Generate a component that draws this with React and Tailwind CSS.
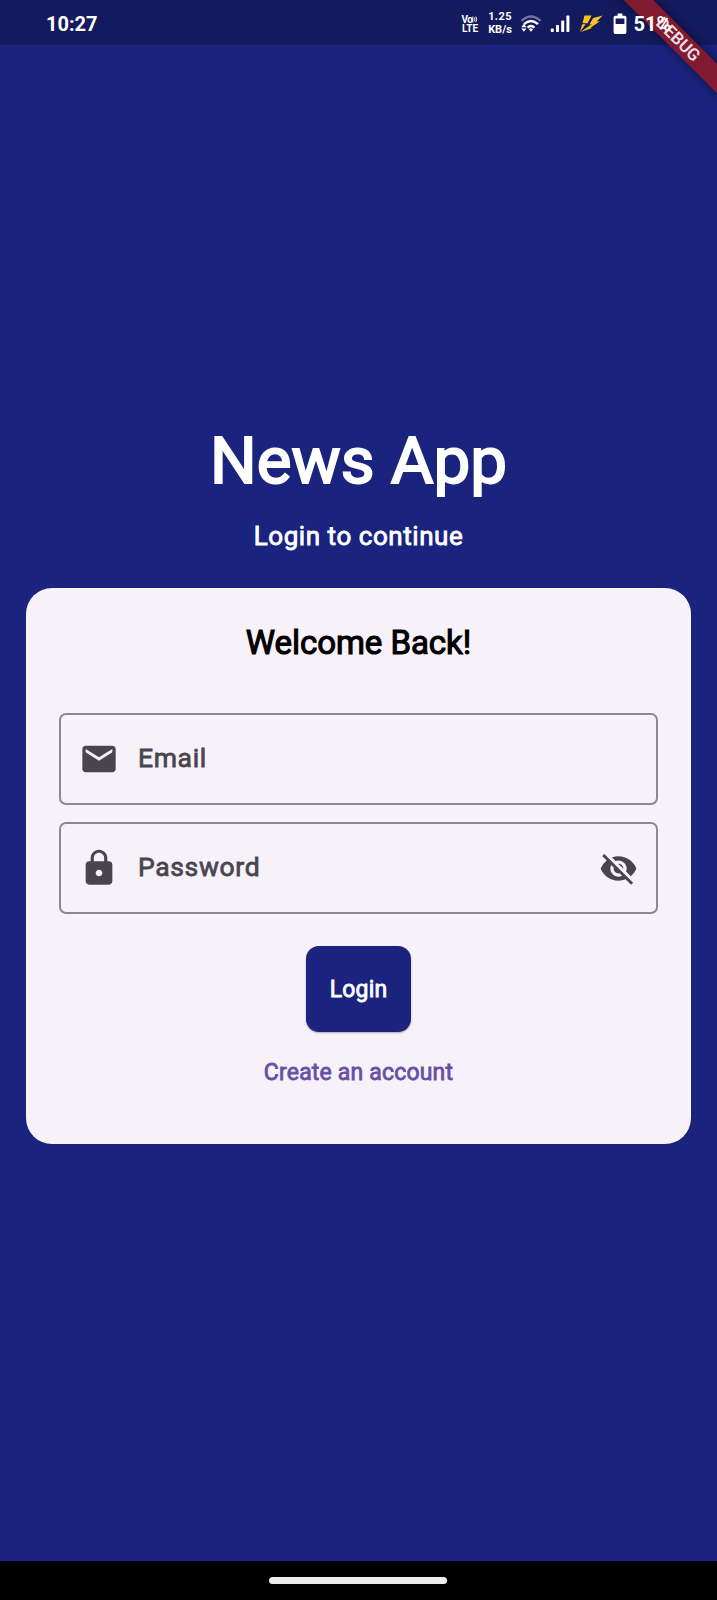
import { MdEmail, MdLock, MdVisibilityOff } from "react-icons/md";

function StatusBar() {
  return (
    <header className="flex h-[45px] shrink-0 items-center bg-[#131a5d] pt-[2px] pl-[46px] text-white">
      <span className="text-[20px] leading-6 font-bold">10:27</span>
      <div className="ml-auto flex h-full items-center">
        <div className="flex w-[18px] flex-col items-center text-[10px] leading-[9px] font-bold">
          <span className="flex h-[9px] items-center tracking-[-0.6px]">
            Vo
            <svg className="h-[9px] w-[6px]" viewBox="0 0 7 9" fill="none" stroke="currentColor" strokeWidth="1.1">
              <path d="M1 1v7M2.8 2.2q1.3 2 0 4.3M4.4 1q2.2 3.2 0 6.6" />
            </svg>
          </span>
          <span>LTE</span>
        </div>
        <div className="ml-[8px] flex w-[26px] flex-col items-center text-[11px] leading-[12.500px] font-bold">
          <span className="tracking-[0.4px]">1.25</span>
          <span>KB/s</span>
        </div>
        <svg className="ml-[7px] h-[20px] w-[22px]" viewBox="0 0 22 20" fill="none" stroke="currentColor" strokeWidth="2.4">
          <path d="M1.500 6.800Q11 -1.800 20.500 6.800" opacity=".4" />
          <path d="M4 10.200Q11 3.600 18 10.200" />
          <path d="M7.600 13.600Q11 10.400 14.400 13.600" />
          <path d="M8.800 15.200Q11 13.400 13.200 15.200L11 17.800z" fill="currentColor" stroke="none" />
          <path d="M3.900 9.800l2.600 3.400H1.300zM3.900 17.800l2.600-3.400H1.300z" fill="currentColor" stroke="none" />
        </svg>
        <svg className="ml-[8px] h-[18px] w-[20px]" viewBox="0 0 20 18" fill="currentColor">
          <rect x="0.8" y="13.5" width="3" height="3.5" rx=".7" />
          <rect x="6" y="10" width="3" height="7" rx=".7" />
          <rect x="11.2" y="5.5" width="3" height="11.5" rx=".7" />
          <rect x="16.4" y="0.5" width="3" height="16.5" rx=".7" />
        </svg>
        <svg className="ml-[9px] h-[18px] w-[24px]" viewBox="0 0 24 18" fill="#fcc421">
          <path d="M5.500 .5H12.600L8.600 8.200H3.500z" />
          <path d="M3.200 9.200H6.600L1 16.800z" />
          <path d="M23.800 .5L14.200 3 10.400 9.600 13 9.100 1.200 17.300 12.500 13.200 11.800 12.600 21 6.200 17.600 6.400z" />
        </svg>
        <svg className="ml-[10px] h-[22px] w-[14px]" viewBox="0 0 14 22">
          <path fill="currentColor" fillRule="evenodd" d="M4.6.5h4.8v2.2h2.2q1.8 0 1.8 1.8v14.7q0 1.8-1.8 1.8H2.4Q.6 21 .6 19.200V4.5q0-1.800 1.800-1.800h2.200zM2.600 5.600v5.400h8.800V5.600z" />
        </svg>
        <span className="relative z-20 ml-[6.500px] w-[83.500px] text-[20px] leading-6 font-bold">51%</span>
      </div>
    </header>
  );
}

function DebugBanner() {
  return (
    <div className="pointer-events-none absolute top-0 right-0 z-10 h-[120px] w-[120px] overflow-hidden">
      <div className="absolute top-[28.500px] left-[-19px] flex h-[21px] w-[200px] rotate-45 items-center justify-center bg-[#7f1a30] text-[17px] leading-none font-semibold text-[#ecdde6] shadow-[0_0_10px_rgba(0,0,0,0.5)]">
        DEBUG
      </div>
    </div>
  );
}

function Field({ icon: Icon, label, trailing: Trailing }) {
  return (
    <label className="flex h-[92px] items-center rounded-[7px] border-2 border-[#8d8791] pr-[18px] pl-[17.500px] text-[#49454f]">
      <Icon className="size-[40px]" />
      <span className="-mt-[2px] ml-[19.500px] text-[26.500px] leading-8 tracking-[0.65px] [-webkit-text-stroke:0.8px_currentColor]">{label}</span>
      {Trailing && <Trailing className="ml-auto size-[39px]" />}
    </label>
  );
}

export default function App() {
  return (
    <div className="relative flex h-[1600px] w-[717px] flex-col overflow-hidden bg-[#1a237e] font-[Roboto,sans-serif]">
      <StatusBar />
      <DebugBanner />
      <main className="flex flex-1 flex-col items-center px-[26px] pt-[376px]">
        <h1 className="text-[65.500px] leading-[80px] text-white [-webkit-text-stroke:2px_currentColor]">News App</h1>
        <p className="mt-[20px] text-[26px] leading-[30px] tracking-[0.55px] text-white [-webkit-text-stroke:0.8px_currentColor]">Login to continue</p>
        <section className="mt-[37px] flex h-[555.500px] w-full flex-col items-center rounded-[26px] bg-[#f7f2fa] px-[33px] pt-[35px]">
          <h2 className="text-[33px] leading-[40px] tracking-[-0.05px] text-black [-webkit-text-stroke:1.1px_currentColor]">Welcome Back!</h2>
          <div className="mt-[50px] flex w-full flex-col gap-[17px]">
            <Field icon={MdEmail} label="Email" />
            <Field icon={MdLock} label="Password" trailing={MdVisibilityOff} />
          </div>
          <button className="mt-[32px] h-[86px] w-[105px] rounded-[13px] bg-[#1a237e] pt-[2px] text-[23px] tracking-[0.15px] text-white shadow-[0_1px_2px_rgba(0,0,0,0.3)] [-webkit-text-stroke:0.8px_currentColor]">Login</button>
          <a className="mt-[27px] text-[23px] leading-[28px] tracking-[0.18px] text-[#6750a4] [-webkit-text-stroke:0.8px_currentColor]">Create an account</a>
        </section>
      </main>
      <footer className="flex h-[39px] shrink-0 items-center justify-center bg-black">
        <div className="mr-px h-[7px] w-[178px] rounded-full bg-[#ececec]" />
      </footer>
    </div>
  );
}
